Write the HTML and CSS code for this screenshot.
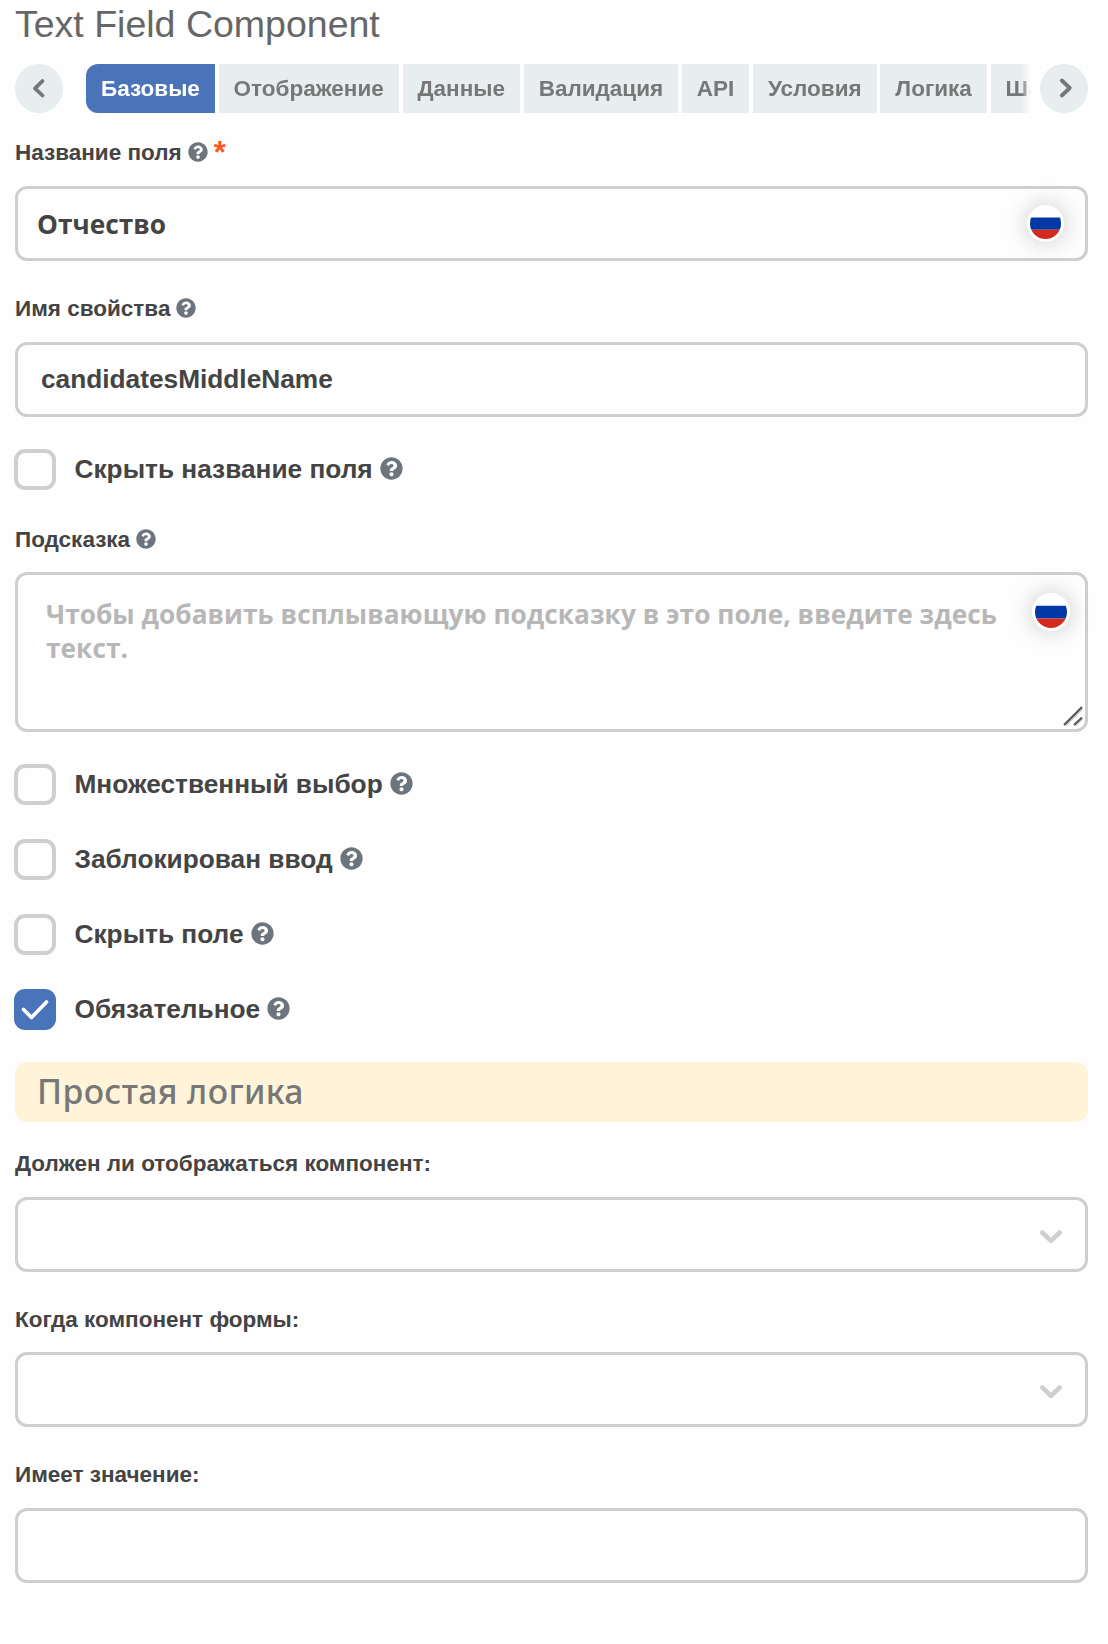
FILE: index.html
```
<!DOCTYPE html>
<html lang="ru">
<head>
<meta charset="utf-8">
<title>Text Field Component</title>
<link rel="stylesheet" href="styles.css">
</head>
<body>
<svg class="sprite" aria-hidden="true">
  <symbol id="help" viewBox="0 0 512 512"><path d="M504 256c0 137-111 248-248 248S8 393 8 256 119 8 256 8s248 111 248 248zM262.700 90c-54.500 0-89.300 23-116.500 63.800-3.500 5.300-2.400 12.400 2.700 16.300l34.700 26.300c5.200 3.900 12.600 3 16.700-2.100 17.900-22.700 30.100-35.800 57.300-35.800 20.400 0 45.700 13.100 45.700 33 0 15-12.400 22.700-32.500 34C247.100 238.500 216 254.900 216 296v4c0 6.600 5.400 12 12 12h56c6.600 0 12-5.400 12-12v-1.300c0-28.500 83.200-29.600 83.200-106.700 0-58-60.200-102-116.500-102zM256 338c-25.400 0-46 20.600-46 46s20.600 46 46 46 46-20.600 46-46-20.600-46-46-46z"/></symbol>
  <symbol id="flag-ru" viewBox="0 0 32 32"><clipPath id="disc"><circle cx="16" cy="16" r="16"/></clipPath><g clip-path="url(#disc)"><path fill="#fff" d="M0 0h32v10H0z"/><path fill="#0039a6" d="M0 9.700h32v12.800H0z"/><path fill="#d52b1e" d="M0 22.500h32V32H0z"/></g></symbol>
</svg>
<main class="settings">
  <h1 class="title">Text Field Component</h1>

  <nav class="tabbar">
    <button class="scroll" type="button" aria-label="Назад"><svg viewBox="0 0 48 49"><path d="M27.500 17 20 24.300l7.500 7.200"/></svg></button>
    <div class="tabs">
      <span class="tab tab--active">Базовые</span>
      <span class="tab">Отображение</span>
      <span class="tab">Данные</span>
      <span class="tab">Валидация</span>
      <span class="tab">API</span>
      <span class="tab">Условия</span>
      <span class="tab">Логика</span>
      <span class="tab">Шаблон</span>
    </div>
    <button class="scroll" type="button" aria-label="Вперёд"><svg viewBox="0 0 48 49"><path d="m21.800 16.500 8 7.500-8 7.500"/></svg></button>
  </nav>

  <section class="field field--first">
    <label class="label">Название поля<svg class="help"><use href="#help"/></svg><span class="star">*</span></label>
    <div class="box box--flag"><span class="value value--open">Отчество</span><span class="flag"><svg><use href="#flag-ru"/></svg></span></div>
  </section>

  <section class="field">
    <label class="label">Имя свойства<svg class="help"><use href="#help"/></svg></label>
    <div class="box box--name"><span class="value">candidatesMiddleName</span></div>
  </section>

  <label class="check check--first"><span class="tick"></span>Скрыть название поля<svg class="help help--lg"><use href="#help"/></svg></label>

  <section class="field field--hint">
    <label class="label label--tight">Подсказка<svg class="help"><use href="#help"/></svg></label>
    <div class="box box--area">
      <p class="placeholder">Чтобы добавить всплывающую подсказку в это поле, введите здесь текст.</p>
      <span class="flag flag--lg"><svg><use href="#flag-ru"/></svg></span>
      <svg class="grip" viewBox="0 0 20 20"><path class="grip-shade" d="M2.500 19.500 19.500 2.500M12.500 19.500l7-7"/><path d="M1 19 19 1M11 19l8-7.500"/></svg>
    </div>
  </section>

  <div class="checks">
    <label class="check"><span class="tick"></span>Множественный выбор<svg class="help help--lg"><use href="#help"/></svg></label>
    <label class="check"><span class="tick"></span>Заблокирован ввод<svg class="help help--lg"><use href="#help"/></svg></label>
    <label class="check"><span class="tick"></span>Скрыть поле<svg class="help help--lg"><use href="#help"/></svg></label>
    <label class="check"><span class="tick tick--on"><svg viewBox="0 0 42 41"><path d="m9.500 20.500 8 8L32.500 13"/></svg></span>Обязательное<svg class="help help--lg"><use href="#help"/></svg></label>
  </div>

  <h2 class="banner">Простая логика</h2>

  <section class="field field--logic">
    <label class="label">Должен ли отображаться компонент:</label>
    <div class="box box--select"><svg class="chevron" viewBox="0 0 22 14"><path d="m2.300 2.500 8.700 8.300 8.700-8.300"/></svg></div>
  </section>
  <section class="field">
    <label class="label label--tight">Когда компонент формы:</label>
    <div class="box box--select"><svg class="chevron" viewBox="0 0 22 14"><path d="m2.300 2.500 8.700 8.300 8.700-8.300"/></svg></div>
  </section>
  <section class="field">
    <label class="label">Имеет значение:</label>
    <div class="box"></div>
  </section>
</main>
</body>
</html>
```
FILE: styles.css
```
* { box-sizing: border-box; }
body { margin: 0; background: #fefefe; color: #444; font-family: "Liberation Sans", Arial, sans-serif; }
svg { display: block; flex: none; }
.sprite { position: absolute; width: 0; height: 0; }
.settings { display: flex; flex-direction: column; width: 1108px; height: 1644px; padding: 0 20px 0 15px; overflow: hidden; }

.title { margin: 0; font-size: 37.5px; font-weight: 400; line-height: 48px; color: #666; }

.tabbar { display: flex; height: 49px; margin-top: 16px; }
.scroll { flex: none; width: 48px; height: 49px; padding: 0; border: 0; border-radius: 50%; background: #e8edef; }
.scroll svg { width: 48px; height: 49px; fill: none; stroke: #777; stroke-width: 3.800; stroke-linecap: round; stroke-linejoin: round; }
.tabs { flex: 1; display: flex; gap: 3.700px; margin: 0 9px 0 23px; overflow: hidden; -webkit-mask-image: linear-gradient(to left, transparent 0, #000 9px); mask-image: linear-gradient(to left, transparent 0, #000 9px); }
.tab { flex: none; padding: 0 15px; background: #e8edef; color: #777; font-size: 22.5px; font-weight: 700; line-height: 50px; white-space: nowrap; }
.tab--active { background: #4a74b9; color: #fff; border-radius: 12px 0 0 12px; }

.field { margin-top: 31px; }
.field--first { margin-top: 23px; }
.field--hint { margin-top: 33px; }
.field--logic { margin-top: 25px; }
.label { display: flex; align-items: center; height: 32px; padding-top: 2px; margin-bottom: 18px; font-size: 22.5px; font-weight: 700; }
.label--tight { margin-bottom: 17px; }
.help { width: 20px; height: 20px; margin: 0 0 2px 6px; fill: #6c757d; }
.help--lg { width: 23px; height: 23px; margin-left: 7px; }
.star { margin-left: 6px; color: #ff5722; font-size: 31px; line-height: 32px; height: 32px; }

.box { display: flex; align-items: center; height: 75px; border: 3px solid #cfcfcf; border-radius: 12px; }
.box--flag { padding: 0 21px 0 19px; justify-content: space-between; }
.box--name { padding: 0 23px; }
.box--select { justify-content: flex-end; padding: 0 23px; }
.box--area { height: 160px; padding: 20px 15px 0 28px; align-items: flex-start; justify-content: space-between; position: relative; }
.value { font-size: 26.25px; font-weight: 700; }
.value--open { font-family: "Open Sans", sans-serif; }
.placeholder { width: 965px; margin: 0; padding-top: 2px; font: 700 26.25px/34px "Open Sans", sans-serif; letter-spacing: .035px; color: #b7b7b7; }
.flag { flex: none; display: flex; align-items: center; justify-content: center; width: 37px; height: 37px; border-radius: 50%; background: #fff; box-shadow: 0 0 24px rgba(0, 0, 0, .22); }
.flag svg { width: 31px; height: 31px; }
.flag--lg { width: 38px; height: 38px; margin-top: -2px; }
.flag--lg svg { width: 32px; height: 32px; }
.grip { position: absolute; right: 2px; bottom: 3px; width: 20px; height: 20px; fill: none; stroke: #555; stroke-width: 2; }
.grip-shade { stroke: #ccc; }
.chevron { width: 22px; height: 14px; margin-top: 4px; fill: none; stroke: #cfcfcf; stroke-width: 4.500; stroke-linecap: round; stroke-linejoin: round; }

.checks { display: flex; flex-direction: column; gap: 34px; margin-top: 32px; }
.check { display: flex; align-items: center; height: 41px; margin-left: -1px; font-size: 26.25px; font-weight: 700; }
.check--first { margin-top: 32px; }
.tick { flex: none; width: 42px; height: 41px; margin-right: 18.500px; border: 4px solid #cfcfcf; border-radius: 11px; }
.tick--on { border: 0; background: #4a74b9; }
.tick svg { width: 42px; height: 41px; fill: none; stroke: #fff; stroke-width: 3.600; stroke-linecap: round; stroke-linejoin: round; }

.banner { margin: 32px 0 0; height: 60px; padding-left: 22px; border-radius: 12px; background: #fff4d9; color: #777; font: 500 33.75px/58px "Noto Sans", sans-serif; letter-spacing: .4px; }
```
